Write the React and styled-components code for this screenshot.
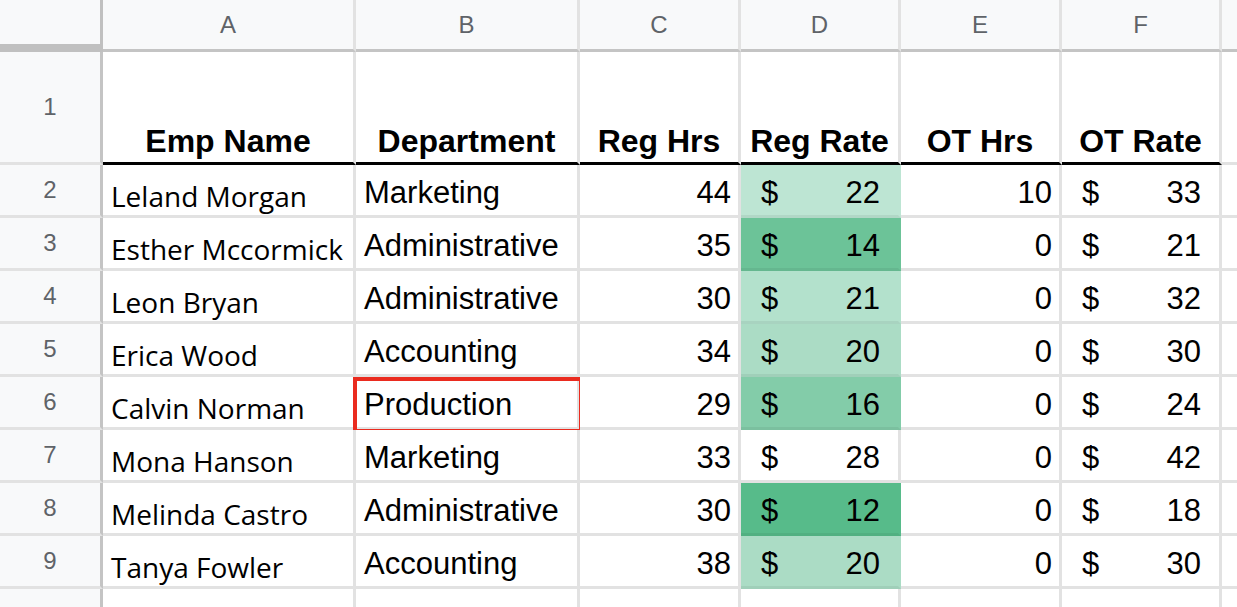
import React from "react";
import styled, { createGlobalStyle, css } from "styled-components";

const Global = createGlobalStyle`
  body { margin: 0; background: #fff; overflow: hidden; }
`;

const Grid = styled.div`
  display: grid;
  grid-template-columns: 103px 253px 224px 161px 160px 161px 160px 40px;
  grid-template-rows: 52px 113px repeat(8, 53px) 40px;
  width: 1237px;
  height: 607px;
  overflow: hidden;
  font-family: "Liberation Sans", Arial, sans-serif;
`;

const Corner = styled.div`
  background: #f8f9fa;
  border-right: 9px solid #c0c0c0;
  border-bottom: 8px solid #c0c0c0;
  box-sizing: border-box;
  margin-right: -6px;
`;

const ColHead = styled.div`
  background: #f8f9fa;
  color: #5f6368;
  font-size: 24px;
  display: flex;
  align-items: center;
  justify-content: center;
  border-right: 3px solid #e2e2e2;
  border-bottom: 3px solid #c4c4c4;
  box-sizing: border-box;
`;

const RowHead = styled.div`
  background: #f8f9fa;
  color: #5f6368;
  font-size: 24px;
  display: flex;
  align-items: center;
  justify-content: center;
  border-right: 3px solid #c4c4c4;
  border-bottom: 3px solid #e2e2e2;
  box-sizing: border-box;
`;

const Cell = styled.div`
  position: relative;
  box-sizing: border-box;
  display: flex;
  align-items: flex-end;
  justify-content: ${(p) => (p.$right ? "flex-end" : "flex-start")};
  padding: 0 ${(p) => (p.$money ? "18px" : p.$right ? "7px" : "8px")} 4px 8px;
  font-size: 31px;
  line-height: 1.15;
  color: #000;
  background: ${(p) => p.$bg || "#fff"};
  border-right: 3px solid ${(p) => (p.$bg ? p.$bg : "#e2e2e2")};
  border-bottom: 3px solid ${(p) => (p.$head ? "#000" : p.$bg ? "rgba(0,0,0,0.06)" : "#e2e2e2")};
  white-space: nowrap;
  ${(p) => p.$open && css`font-family: "Open Sans", sans-serif; font-size: 28px; padding-bottom: 3px;`}
  ${(p) => p.$head && css`font-weight: bold; justify-content: center; padding: 0 0 2px; font-size: 32px;`}
  ${(p) => p.$selected && css`
    &::after {
      content: "";
      position: absolute;
      inset: 0px -6px -6px -3px;
      border: 4px solid #ea2b1f;
    }
  `}
`;

const Money = styled.span`
  display: flex;
  justify-content: space-between;
  width: 100%;
  padding-left: 12px;
`;

const rows = [
  ["Leland Morgan", "Marketing", 44, 22, 10, 33],
  ["Esther Mccormick", "Administrative", 35, 14, 0, 21],
  ["Leon Bryan", "Administrative", 30, 21, 0, 32],
  ["Erica Wood", "Accounting", 34, 20, 0, 30],
  ["Calvin Norman", "Production", 29, 16, 0, 24],
  ["Mona Hanson", "Marketing", 33, 28, 0, 42],
  ["Melinda Castro", "Administrative", 30, 12, 0, 18],
  ["Tanya Fowler", "Accounting", 38, 20, 0, 30],
];

const rateColor = {
  22: "#bde5d3", 14: "#6cc398", 21: "#b3e1cc", 20: "#abdcc5",
  16: "#83cca9", 28: null, 12: "#57bb8a",
};

export default function App() {
  return (
    <>
      <Global />
      <Grid>
        <Corner />
        {["A", "B", "C", "D", "E", "F", ""].map((c, i) => (
          <ColHead key={i}>{c}</ColHead>
        ))}
        <RowHead>1</RowHead>
        {["Emp Name", "Department", "Reg Hrs", "Reg Rate", "OT Hrs", "OT Rate"].map((h) => (
          <Cell key={h} $head>{h}</Cell>
        ))}
        <Cell />
        {rows.map((r, i) => (
          <React.Fragment key={i}>
            <RowHead>{i + 2}</RowHead>
            <Cell $open>{r[0]}</Cell>
            <Cell $selected={i === 4}>{r[1]}</Cell>
            <Cell $right>{r[2]}</Cell>
            <Cell $right $money $bg={rateColor[r[3]]}>
              <Money><span>$</span><span>{r[3]}</span></Money>
            </Cell>
            <Cell $right>{r[4]}</Cell>
            <Cell $right $money>
              <Money><span>$</span><span>{r[5]}</span></Money>
            </Cell>
            <Cell />
          </React.Fragment>
        ))}
        <RowHead />
        {Array.from({ length: 7 }).map((_, i) => <Cell key={i} />)}
      </Grid>
    </>
  );
}
